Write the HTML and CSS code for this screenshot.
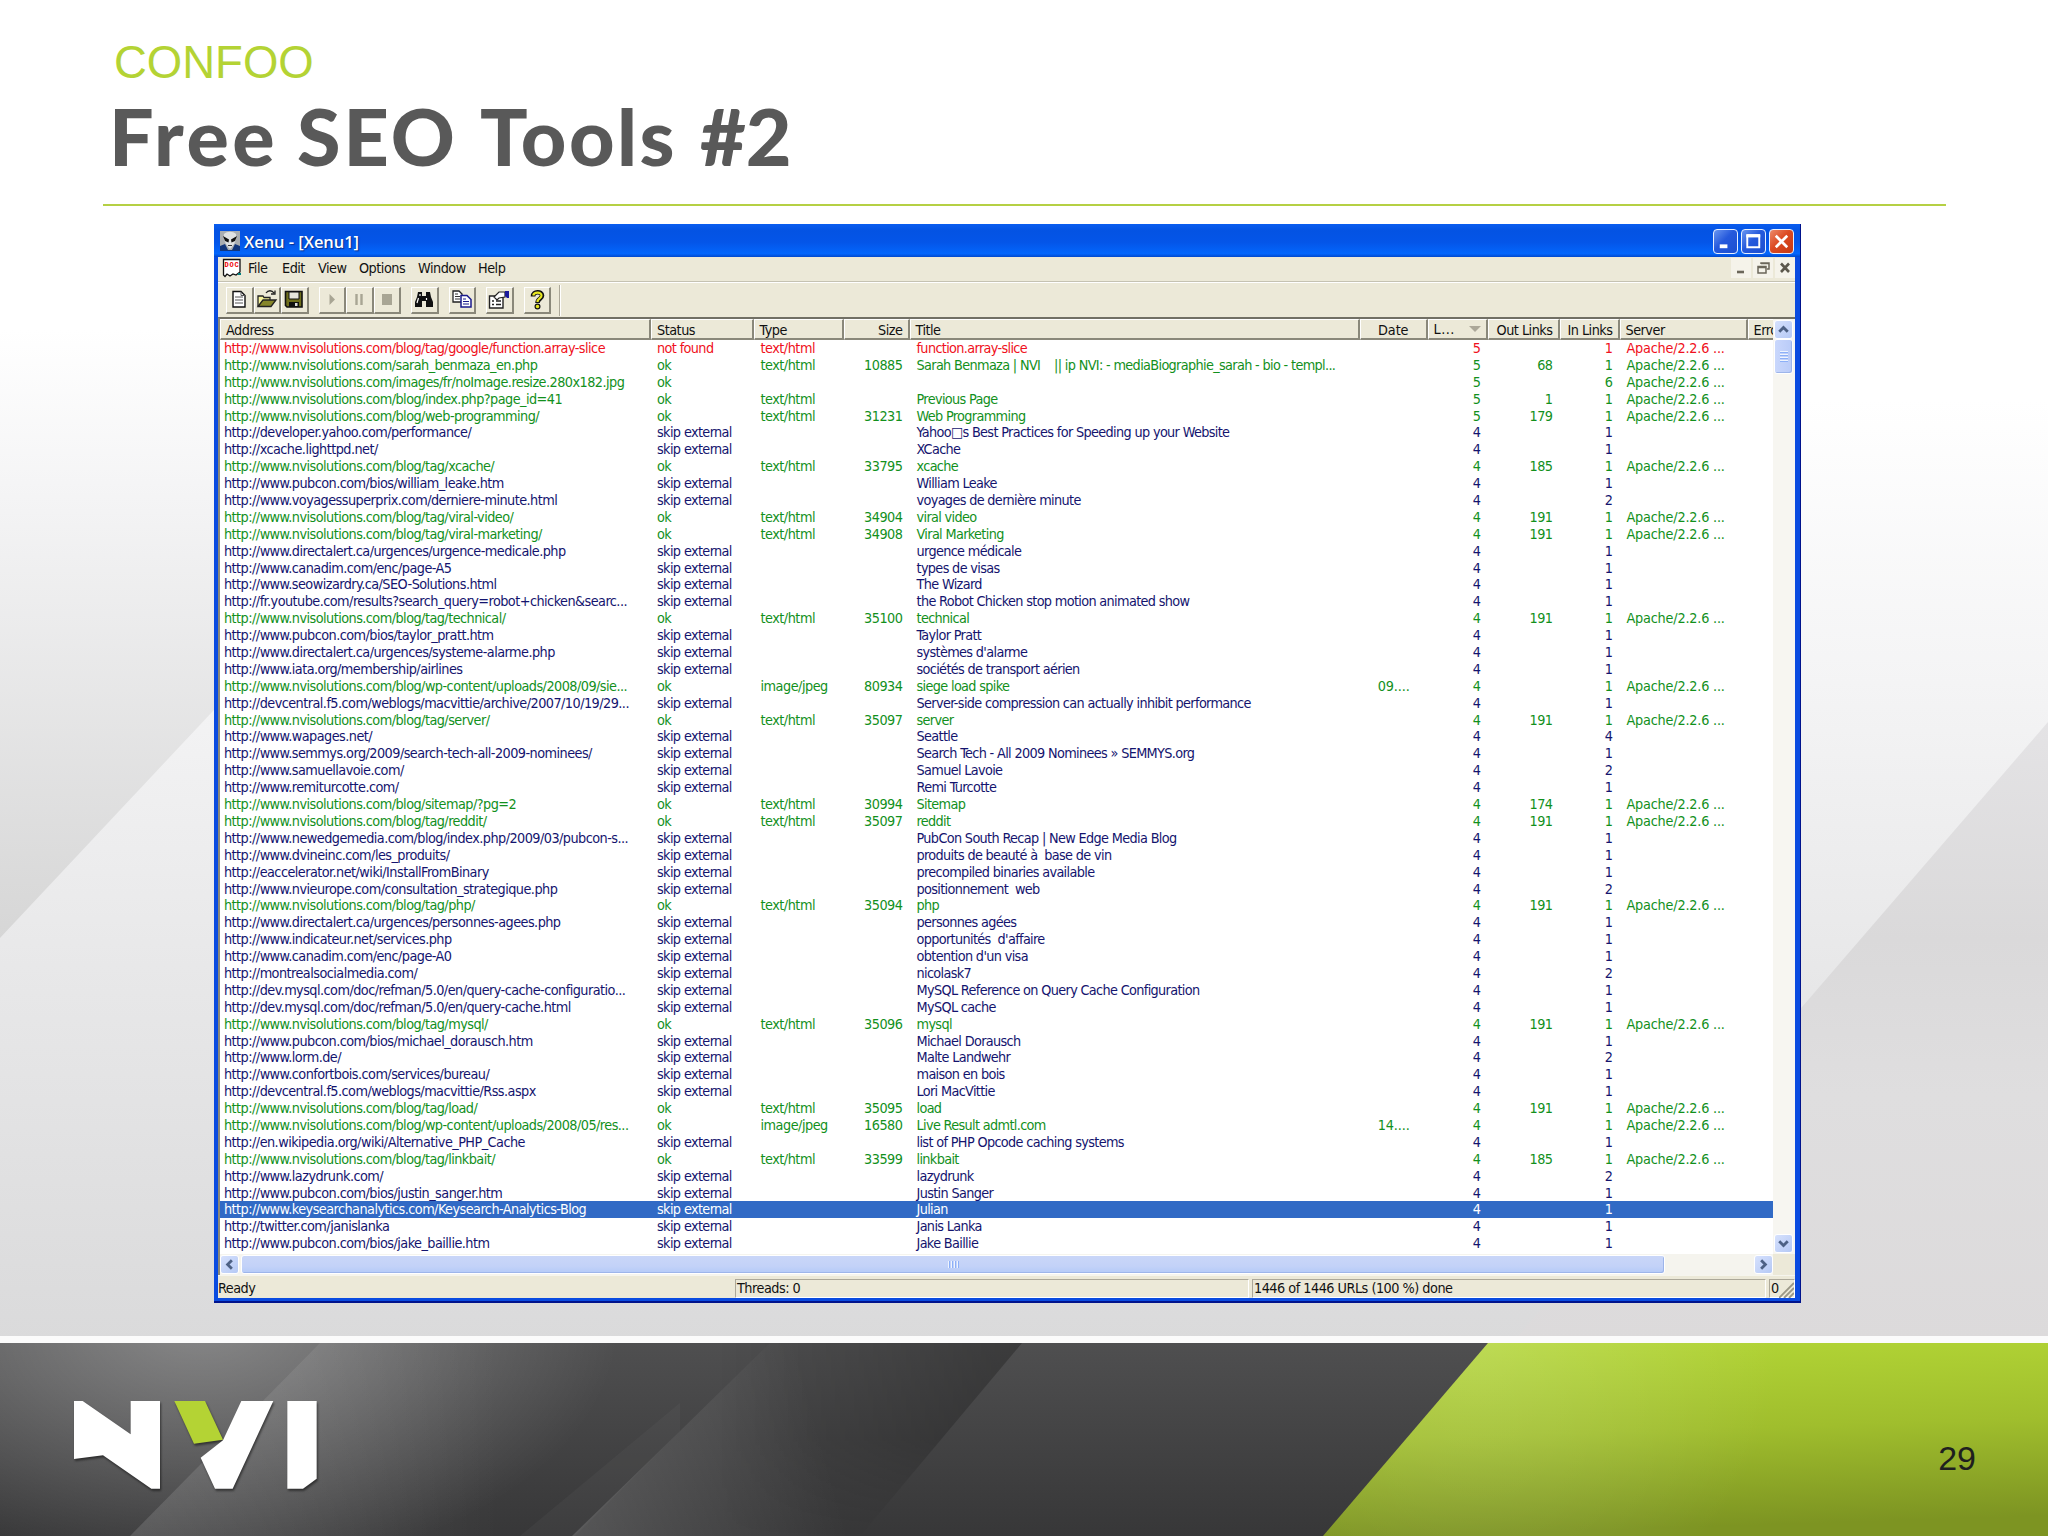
FILE: index.html
```html
<!DOCTYPE html>
<html>
<head>
<meta charset="utf-8">
<title>Free SEO Tools #2</title>
<link rel="stylesheet" href="styles.css">
</head>
<body>
<div class="slide">
  <svg class="backdrop" width="2048" height="1343" viewBox="0 0 2048 1343">
    <defs>
      <linearGradient id="bg-top" gradientUnits="userSpaceOnUse" x1="0" y1="330" x2="0" y2="940">
        <stop offset="0" stop-color="#ffffff"/><stop offset=".25" stop-color="#f5f5f6"/><stop offset="1" stop-color="#d6d6d6"/>
      </linearGradient>
      <linearGradient id="bg-mid" gradientUnits="userSpaceOnUse" x1="0" y1="400" x2="0" y2="1343">
        <stop offset="0" stop-color="#ffffff"/><stop offset=".3" stop-color="#f4f4f5"/><stop offset=".6" stop-color="#e8e8e9"/><stop offset="1" stop-color="#dadadb"/>
      </linearGradient>
      <linearGradient id="bg-right" gradientUnits="userSpaceOnUse" x1="0" y1="722" x2="0" y2="1343">
        <stop offset="0" stop-color="#e4e3e5"/><stop offset=".35" stop-color="#dad9da"/><stop offset=".6" stop-color="#dfdedf"/><stop offset="1" stop-color="#dcdadb"/>
      </linearGradient>
    </defs>
    <rect width="2048" height="1343" fill="url(#bg-mid)"/>
    <path d="M0 0H880L0 938Z" fill="url(#bg-top)"/>
    <path d="M2048 722L1802 1007L1512 1343H2048Z" fill="url(#bg-right)"/>
  </svg>

  <div class="heading">
    <div class="event">CONFOO</div>
    <h1><span class="w1">Free</span><span class="w2">SEO</span><span class="w3">Tools</span><span class="w4">#2</span></h1>
  </div>

  <div class="window">
    <div class="titlebar">
      <svg width="20" height="20" viewBox="0 0 20 20">
        <rect width="20" height="20" fill="#a9adb0"/>
        <path d="M0 20V15L5 13L8 19L12 19L15 13L20 15V20Z" fill="#12377c"/>
        <path d="M4 3C7 0 13 0 16 3C17 8 15 13 10 18C5 13 3 8 4 3Z" fill="#dfe2e2"/>
        <path d="M3 5L9 8.500L8.500 11.500L5 10ZM17 5L11 8.500L11.500 11.500L15 10Z" fill="#111"/>
        <path d="M8 14.500H12" stroke="#333"/>
      </svg>
      <span class="caption">Xenu - [Xenu1]</span>
      <div class="wbtn"><svg viewBox="0 0 24 24"><path d="M6 15H14V19H6Z" fill="#fff"/></svg></div>
      <div class="wbtn"><svg viewBox="0 0 24 24"><path d="M5.500 6V18H18V6Z" fill="none" stroke="#fff" stroke-width="2"/><path d="M4.500 6H19" stroke="#fff" stroke-width="3.500"/></svg></div>
      <div class="wbtn wclose"><svg viewBox="0 0 24 24"><path d="M6 6L18 18M18 6L6 18" stroke="#fff" stroke-width="2.800"/></svg></div>
    </div>

    <div class="menubar">
      <svg width="20" height="20" viewBox="0 0 20 20">
        <path d="M1.500 1.500H18V14L14 17L11 16L8 18L5 16L3 18.500L1.500 17Z" fill="#fff" stroke="#111" stroke-width="1.300"/>
        <path d="M16 15H19V17H16Z" fill="#008080"/>
        <text x="2.500" y="8.500" class="doc">DOC</text>
      </svg>
      <span class="m1">File</span><span class="m2">Edit</span><span class="m3">View</span><span class="m4">Options</span><span class="m5">Window</span><span>Help</span>
      <div class="mdi">
        <svg viewBox="0 0 20 20"><path d="M6 14H13" stroke="#6b675a" stroke-width="2.600"/></svg>
        <svg viewBox="0 0 20 20"><path d="M5 8.500H13V15H5ZM5 9.500H13M8 6V5H16V11H14M8 5.500H16" fill="none" stroke="#6b675a" stroke-width="1.500"/></svg>
        <svg viewBox="0 0 20 20"><path d="M6 5.500L14 14M14 5.500L6 14" stroke="#5c584c" stroke-width="2.600"/></svg>
      </div>
    </div>

    <div class="toolbar">
      <div class="btns">
        <div class="tb"><svg viewBox="0 0 24 22"><path d="M6 2.500H14L18 6.500V18H6Z" fill="#fff" stroke="#111" stroke-width="1.400"/><path d="M14 2.500V6.500H18M8 8H16M8 11H16M8 14H16" fill="none" stroke="#555"/></svg></div>
        <div class="tb"><svg viewBox="0 0 24 22"><path d="M3 17V7H8L9 8.500H15V11" fill="#f5f29a" stroke="#222" stroke-width="1.300"/><path d="M3 17.500L8 11H21L16 17.500Z" fill="#86862a" stroke="#222" stroke-width="1.300"/><path d="M11 4C13 1 17 1 19 4M20 1.500V5H16" fill="none" stroke="#222" stroke-width="1.300"/></svg></div>
        <div class="tb"><svg viewBox="0 0 24 22"><path d="M3.500 2.500H20V18H5L3.500 16.500Z" fill="#6f6f1c" stroke="#111" stroke-width="1.600"/><path d="M7 3H17V10H7Z" fill="#e6e6dc" stroke="#111"/><path d="M7 13H17V18H7Z" fill="#111"/><path d="M13 14H15.500V17H13Z" fill="#ddd"/></svg></div>
      </div>
      <div class="btns">
        <div class="tb"><svg viewBox="0 0 24 22"><path d="M9.500 5L15 10.500L9.500 16Z" fill="#a8a594"/></svg></div>
        <div class="tb"><svg viewBox="0 0 24 22"><path d="M9.500 5V16M14.500 5V16" stroke="#a8a594" stroke-width="2.400"/></svg></div>
        <div class="tb"><svg viewBox="0 0 24 22"><path d="M7 5H17V16H7Z" fill="#a8a594"/></svg></div>
      </div>
      <div class="btns">
        <div class="tb"><svg viewBox="0 0 24 22"><path d="M6 3H10V7H14V3H18L19 8L21 13V18H14V12H10V18H3V13L5 8Z" fill="#111"/><path d="M6.500 9L5 14M14.500 9V11M8 5V7" stroke="#fff" stroke-width="1.200"/></svg></div>
      </div>
      <div class="btns">
        <div class="tb"><svg viewBox="0 0 24 22"><path d="M3 2H9L12 5V13H3Z" fill="#fff" stroke="#222" stroke-width="1.300"/><path d="M5 5H8M5 7.500H10M5 10H10" stroke="#333"/><path d="M11 6.500H17L21 10.500V18H11Z" fill="#fff" stroke="#1a1a8c" stroke-width="1.500"/><path d="M13 10H16M13 12.500H19M13 15H19" stroke="#1a1a8c"/></svg></div>
      </div>
      <div class="btns">
        <div class="tb"><svg viewBox="0 0 24 22"><path d="M2.500 7H16V19H2.500Z" fill="#fff" stroke="#222" stroke-width="1.400"/><path d="M5 12H7M9 12H14M5 15.500H7M9 15.500H14" stroke="#222" stroke-width="1.300"/><path d="M7 8L12 3H18V8L12 9L10 11Z" fill="#fff" stroke="#222" stroke-width="1.200"/><path d="M18 2H22V9H20L18 7Z" fill="#1a1a9c"/></svg></div>
      </div>
      <div class="btns">
        <div class="tb"><svg viewBox="0 0 24 22"><path d="M8 7.500C8 2 17 2 17 6.500C17 10 12.500 9.500 12.500 14" fill="none" stroke="#111" stroke-width="4.600"/><path d="M8.200 6.500C9 3 16.500 2.500 16.500 6.500C16.500 9.500 12.500 9.500 12.500 13" fill="none" stroke="#e8e822" stroke-width="2.200"/><circle cx="12.500" cy="17.500" r="2.400" fill="#e8e822" stroke="#111" stroke-width="1.200"/></svg></div>
      </div>
      <div class="tb-end"></div>
    </div>

    <div class="client">
      <div class="list">
        <div class="row head">
          <span>Address</span><span>Status</span><span>Type</span><span class="r">Size</span><span>Title</span><span class="c">Date</span><span class="lvl">L...<i></i></span><span class="r">Out Links</span><span class="r">In Links</span><span>Server</span><span>Error</span>
        </div>
        <div id="rows"></div>
      </div>
      <div class="vscroll">
        <div class="sbtn"><svg viewBox="0 0 18 18"><path d="M4.500 11.500L9 7L13.500 11.500" fill="none" stroke="#4d6185" stroke-width="3"/></svg></div>
        <div class="vthumb"><i></i><i></i><i></i><i></i></div>
        <div class="track"></div>
        <div class="sbtn"><svg viewBox="0 0 18 18"><path d="M4.500 6.500L9 11L13.500 6.500" fill="none" stroke="#4d6185" stroke-width="3"/></svg></div>
      </div>
    </div>

    <div class="hscroll">
      <div class="sbtn"><svg viewBox="0 0 18 18"><path d="M11.500 4.500L7 9L11.500 13.500" fill="none" stroke="#4d6185" stroke-width="3"/></svg></div>
      <div class="hthumb"><i></i><i></i><i></i><i></i></div>
      <div class="track"></div>
      <div class="sbtn"><svg viewBox="0 0 18 18"><path d="M6.500 4.500L11 9L6.500 13.500" fill="none" stroke="#4d6185" stroke-width="3"/></svg></div>
      <div class="corner"></div>
    </div>

    <div class="statusbar">
      <div class="s0">Ready</div>
      <div class="pane p1">Threads: 0</div>
      <div class="pane p2">1446 of 1446 URLs (100 %) done</div>
      <div class="pane p3">0<svg width="15" height="16" viewBox="0 0 15 16"><path d="M0 16L15 1M5 16L15 6M10 16L15 11" stroke="#9a9786" stroke-width="1.800"/></svg></div>
    </div>
  </div>

  <div class="footer">
    <svg class="footer-bg" width="2048" height="193" viewBox="0 0 2048 193">
      <defs>
        <linearGradient id="f-base" x1="0" y1="0" x2="0" y2="1">
          <stop offset="0" stop-color="#4f4f50"/><stop offset="1" stop-color="#373738"/>
        </linearGradient>
        <radialGradient id="f-glow" gradientUnits="userSpaceOnUse" cx="200" cy="-20" r="420" gradientTransform="matrix(1 0 0 .6 0 -8)">
          <stop offset="0" stop-color="#fff" stop-opacity=".32"/><stop offset="1" stop-color="#fff" stop-opacity="0"/>
        </radialGradient>
        <linearGradient id="f-band" gradientUnits="userSpaceOnUse" x1="130" y1="193" x2="500" y2="193">
          <stop offset="0" stop-color="#fff" stop-opacity=".14"/><stop offset="1" stop-color="#fff" stop-opacity="0"/>
        </linearGradient>
        <linearGradient id="f-band2" gradientUnits="userSpaceOnUse" x1="570" y1="193" x2="830" y2="120">
          <stop offset="0" stop-color="#fff" stop-opacity=".15"/><stop offset="1" stop-color="#fff" stop-opacity="0"/>
        </linearGradient>
        <linearGradient id="f-dark" gradientUnits="userSpaceOnUse" x1="720" y1="0" x2="1020" y2="0">
          <stop offset="0" stop-color="#000" stop-opacity="0"/><stop offset="1" stop-color="#000" stop-opacity=".25"/>
        </linearGradient>
        <linearGradient id="f-fade" x1="0" y1="0" x2="0" y2="1">
          <stop offset="0" stop-color="#fff"/><stop offset=".5" stop-color="#fff"/><stop offset="1" stop-color="#000"/>
        </linearGradient>
        <mask id="f-mask"><rect width="2048" height="193" fill="url(#f-fade)"/></mask>
        <linearGradient id="f-green" x1="0" y1="0" x2=".12" y2="1">
          <stop offset="0" stop-color="#b3d636"/><stop offset=".5" stop-color="#a0be2d"/><stop offset="1" stop-color="#7d9422"/>
        </linearGradient>
        <radialGradient id="f-light" gradientUnits="userSpaceOnUse" cx="1480" cy="0" r="300">
          <stop offset="0" stop-color="#fff" stop-opacity=".15"/><stop offset="1" stop-color="#fff" stop-opacity="0"/>
        </radialGradient>
      </defs>
      <rect width="2048" height="193" fill="url(#f-base)"/>
      <path d="M720 0H1022L860 193H620Z" fill="url(#f-dark)" mask="url(#f-mask)"/>
      <rect width="800" height="193" fill="url(#f-glow)"/>
      <path d="M320 0H720L520 193H130Z" fill="url(#f-band)"/>
      <path d="M680 60L520 193H575L680 88Z" fill="#fff" fill-opacity=".03"/>
      <path d="M770 0L680 88L572 193H860L900 0Z" fill="url(#f-band2)"/>
      <path d="M1488 0L1323 193H2048V0Z" fill="url(#f-green)"/>
      <path d="M1488 0L1323 193H2048V0Z" fill="url(#f-light)"/>
    </svg>
    <svg class="logo" width="250" height="92" viewBox="0 0 750 276">
      <g fill="#fff">
        <path d="M0 0H26L170 100V0H258V263H232L87 163L0 174Z"/>
        <path d="M502 0H598L476 263H423L380 170L447 118Z"/>
        <path d="M640 0H728V233L687 263H640Z"/>
      </g>
      <path d="M301 0H393L447 116L360 128Z" fill="#b4d334"/>
    </svg>
    <div class="page">29</div>
  </div>
</div>

<script>
// address | status | type | size | title | date | level | out | in
// n = not found, o = ok, s = skip external
var data = [
'http://www.nvisolutions.com/blog/tag/google/function.array-slice|n|h||function.array-slice||5||1',
'http://www.nvisolutions.com/sarah_benmaza_en.php|o|h|10885|Sarah Benmaza | NVI    || ip NVI: - mediaBiographie_sarah - bio - templ...||5|68|1',
'http://www.nvisolutions.com/images/fr/noImage.resize.280x182.jpg|o|||||5||6',
'http://www.nvisolutions.com/blog/index.php?page_id=41|o|h||Previous Page||5|1|1',
'http://www.nvisolutions.com/blog/web-programming/|o|h|31231|Web Programming||5|179|1',
'http://developer.yahoo.com/performance/|s|||Yahoo\u25a1s Best Practices for Speeding up your Website||4||1',
'http://xcache.lighttpd.net/|s|||XCache||4||1',
'http://www.nvisolutions.com/blog/tag/xcache/|o|h|33795|xcache||4|185|1',
'http://www.pubcon.com/bios/william_leake.htm|s|||William Leake||4||1',
'http://www.voyagessuperprix.com/derniere-minute.html|s|||voyages de dernière minute||4||2',
'http://www.nvisolutions.com/blog/tag/viral-video/|o|h|34904|viral video||4|191|1',
'http://www.nvisolutions.com/blog/tag/viral-marketing/|o|h|34908|Viral Marketing||4|191|1',
'http://www.directalert.ca/urgences/urgence-medicale.php|s|||urgence médicale||4||1',
'http://www.canadim.com/enc/page-A5|s|||types de visas||4||1',
'http://www.seowizardry.ca/SEO-Solutions.html|s|||The Wizard||4||1',
'http://fr.youtube.com/results?search_query=robot+chicken&searc...|s|||the Robot Chicken stop motion animated show||4||1',
'http://www.nvisolutions.com/blog/tag/technical/|o|h|35100|technical||4|191|1',
'http://www.pubcon.com/bios/taylor_pratt.htm|s|||Taylor Pratt||4||1',
'http://www.directalert.ca/urgences/systeme-alarme.php|s|||systèmes d\'alarme||4||1',
'http://www.iata.org/membership/airlines|s|||sociétés de transport aérien||4||1',
'http://www.nvisolutions.com/blog/wp-content/uploads/2008/09/sie...|o|i|80934|siege load spike|09....|4||1',
'http://devcentral.f5.com/weblogs/macvittie/archive/2007/10/19/29...|s|||Server-side compression can actually inhibit performance||4||1',
'http://www.nvisolutions.com/blog/tag/server/|o|h|35097|server||4|191|1',
'http://www.wapages.net/|s|||Seattle||4||4',
'http://www.semmys.org/2009/search-tech-all-2009-nominees/|s|||Search Tech - All 2009 Nominees » SEMMYS.org||4||1',
'http://www.samuellavoie.com/|s|||Samuel Lavoie||4||2',
'http://www.remiturcotte.com/|s|||Remi Turcotte||4||1',
'http://www.nvisolutions.com/blog/sitemap/?pg=2|o|h|30994|Sitemap||4|174|1',
'http://www.nvisolutions.com/blog/tag/reddit/|o|h|35097|reddit||4|191|1',
'http://www.newedgemedia.com/blog/index.php/2009/03/pubcon-s...|s|||PubCon South Recap | New Edge Media Blog||4||1',
'http://www.dvineinc.com/les_produits/|s|||produits de beauté à  base de vin||4||1',
'http://eaccelerator.net/wiki/InstallFromBinary|s|||precompiled binaries available||4||1',
'http://www.nvieurope.com/consultation_strategique.php|s|||positionnement  web||4||2',
'http://www.nvisolutions.com/blog/tag/php/|o|h|35094|php||4|191|1',
'http://www.directalert.ca/urgences/personnes-agees.php|s|||personnes agées||4||1',
'http://www.indicateur.net/services.php|s|||opportunités  d\'affaire||4||1',
'http://www.canadim.com/enc/page-A0|s|||obtention d\'un visa||4||1',
'http://montrealsocialmedia.com/|s|||nicolask7||4||2',
'http://dev.mysql.com/doc/refman/5.0/en/query-cache-configuratio...|s|||MySQL Reference on Query Cache Configuration||4||1',
'http://dev.mysql.com/doc/refman/5.0/en/query-cache.html|s|||MySQL cache||4||1',
'http://www.nvisolutions.com/blog/tag/mysql/|o|h|35096|mysql||4|191|1',
'http://www.pubcon.com/bios/michael_dorausch.htm|s|||Michael Dorausch||4||1',
'http://www.lorm.de/|s|||Malte Landwehr||4||2',
'http://www.confortbois.com/services/bureau/|s|||maison en bois||4||1',
'http://devcentral.f5.com/weblogs/macvittie/Rss.aspx|s|||Lori MacVittie||4||1',
'http://www.nvisolutions.com/blog/tag/load/|o|h|35095|load||4|191|1',
'http://www.nvisolutions.com/blog/wp-content/uploads/2008/05/res...|o|i|16580|Live Result admtl.com|14....|4||1',
'http://en.wikipedia.org/wiki/Alternative_PHP_Cache|s|||list of PHP Opcode caching systems||4||1',
'http://www.nvisolutions.com/blog/tag/linkbait/|o|h|33599|linkbait||4|185|1',
'http://www.lazydrunk.com/|s|||lazydrunk||4||2',
'http://www.pubcon.com/bios/justin_sanger.htm|s|||Justin Sanger||4||1',
'http://www.keysearchanalytics.com/Keysearch-Analytics-Blog|s|||Julian||4||1',
'http://twitter.com/janislanka|s|||Janis Lanka||4||1',
'http://www.pubcon.com/bios/jake_baillie.htm|s|||Jake Baillie||4||1'
];
var types = { h: 'text/html', i: 'image/jpeg' };
var names = { n: 'not found', o: 'ok', s: 'skip external' };
var cols = ['addr', 'st', '', 'r', 'ttl', 'c', 'r', 'r', 'r', 'srv'];
var box = document.getElementById('rows');

data.forEach(function (line, i) {
  var p = line.split('|');
  // titles may contain the separator themselves
  var tail = p.splice(p.length - 4, 4);
  var title = p.slice(4).join('|');
  var kind = p[1];
  var cells = [p[0], names[kind], types[p[2]] || '', p[3], title].concat(tail);
  cells.push(kind == 's' ? '' : 'Apache/2.2.6 ...');
  var row = document.createElement('div');
  row.className = 'row ' + kind + (i == 51 ? ' selected' : '');
  cells.forEach(function (text, c) {
    var cell = document.createElement('span');
    cell.className = cols[c];
    cell.textContent = text;
    row.appendChild(cell);
  });
  box.appendChild(row);
});
</script>
</body>
</html>
```
FILE: styles.css
```css
* { box-sizing: border-box; }
body { margin: 0; background: #fff; }
.slide { position: relative; width: 2048px; height: 1536px; overflow: hidden; display: flex; flex-direction: column; }
.backdrop { position: absolute; left: 0; top: 0; }

.heading { position: relative; height: 206px; flex: none; margin: 0 102px 0 103px; padding: 37px 0 0 11px; border-bottom: 2px solid #b5d044; }
.event { height: 51px; line-height: 52px; font-family: "Liberation Sans", Arial, sans-serif; font-size: 45.500px; color: #b4d334; }
h1 { display: flex; margin: 0 0 0 -5px; height: 96px; line-height: 96px; font-family: Lato, "Open Sans", sans-serif; font-weight: 900; font-size: 79px; color: #595959; white-space: nowrap; }
.w1 { width: 188px; letter-spacing: 3.500px; }
.w2 { width: 183px; letter-spacing: 3px; }
.w3 { width: 220px; letter-spacing: 2.500px; }

.window { position: relative; width: 1587px; height: 1079px; flex: none; margin: 18px 0 0 214px; padding: 0 5px 4px 4px; background: #0a4be0; border-right: 1px solid #00138c; border-bottom: 2px solid #00138c; display: flex; flex-direction: column; font-family: "DejaVu Sans Condensed", "DejaVu Sans", sans-serif; font-size: 14.300px; letter-spacing: -0.500px; color: #111; }
.titlebar { height: 33px; flex: none; margin: 0 -5px 0 -4px; padding: 1px 6px 0 6px; display: flex; align-items: center; background: linear-gradient(#0a5df0, #0453e3 20%, #0455e8 55%, #0366fc 90%, #0148cc); }
.caption { flex: 1; margin-left: 4px; font-family: "Open Sans", sans-serif; font-weight: 600; font-size: 16.500px; letter-spacing: -0.050px; color: #fff; text-shadow: 1px 1px 1px #0a2f8c; }
.wbtn { width: 25px; height: 25px; margin-left: 3px; border: 1px solid #e8f0ff; border-radius: 4px; background: linear-gradient(135deg, #6a96f0, #2559dc 45%, #1c4fd0); }
.wbtn svg { display: block; width: 23px; height: 23px; }
.wclose { background: linear-gradient(135deg, #ec8a6a, #dc4a22 45%, #c63a14); }

.menubar { height: 25px; flex: none; padding: 0 0 2px 4px; display: flex; align-items: center; background: #ece9d8; border-bottom: 1px solid #c5c2b2; }
.menubar > svg { margin-right: 6px; }
.doc { font: bold 7px "Liberation Mono", monospace; letter-spacing: 0.800px; fill: #e00; }
.m1 { width: 34px; }
.m2 { width: 36px; }
.m3 { width: 41px; }
.m4 { width: 59px; }
.m5 { width: 60px; }
.mdi { margin-left: auto; display: flex; gap: 2px; }
.mdi svg { width: 20px; height: 20px; background: #f5f3ea; }

.toolbar { height: 35px; flex: none; padding: 4px 0 0 8px; display: flex; background: #ece9d8; border-top: 1px solid #fff; }
.btns { display: flex; height: 27px; margin-right: 10px; }
.tb { width: 27.500px; height: 27px; border: 1px solid; border-color: #fff #8a887a #8a887a #fff; border-right-width: 2px; border-bottom-width: 2px; }
.tb svg { display: block; width: 24px; height: 24px; }
.tb-end { width: 2px; height: 31px; margin: -2px 0 0 -2px; border-left: 1px solid #aca899; border-right: 1px solid #fff; }

.client { height: 937px; flex: none; display: flex; border-top: 2px solid #716f64; border-left: 2px solid #8a887a; background: #fff; }
.list { width: 1554px; overflow: hidden; }
.row { display: grid; grid-template-columns: 431px 102.500px 90.500px 65.500px 450.500px 67.500px 60px 72px 60px 128px 70px; height: 16.906px; line-height: 17px; white-space: pre; }
.row span { padding: 0 7px; overflow: hidden; }
.row .addr { padding-left: 4px; letter-spacing: -0.540px; }
.row .st { padding-left: 6px; letter-spacing: -0.620px; }
.row .ttl { letter-spacing: -0.650px; }
.row .srv { letter-spacing: -0.200px; }
.row .r { text-align: right; }
.row .c { text-align: center; letter-spacing: -0.100px; }
.n { color: #f01020; }
.o { color: #12901c; }
.s { color: #14146e; }
.selected { background: #316ac5; color: #fff; }
.head { height: 21px; line-height: 21px; }
.head span { background: #ece9d8; border-top: 1px solid #fff; border-left: 1px solid #fff; border-right: 2px solid #8a887a; border-bottom: 2px solid #8a887a; padding: 0 5px 0 5px; }
.head .lvl { display: flex; justify-content: space-between; align-items: center; letter-spacing: 0.500px; }
.lvl i { border: 6px solid transparent; border-top: 6px solid #aca899; border-bottom: 0; }

.vscroll { flex: 1; padding: 1px 2px 1px 1px; display: flex; flex-direction: column; background: #f7f6f1; }
.sbtn { width: 19px; height: 19px; flex: none; border: 1px solid #fff; border-radius: 3px; background: linear-gradient(135deg, #d6e1fd, #b5c9f5); }
.sbtn svg { display: block; width: 17px; height: 17px; }
.vthumb, .hthumb { display: flex; align-items: center; justify-content: center; border: 1px solid #fff; border-radius: 3px; box-shadow: inset -1px -1px 0 #9db5ea; }
.vthumb { width: 19px; height: 35px; flex-direction: column; gap: 1px; background: linear-gradient(90deg, #c9d7fc, #b9cbf8); }
.vthumb i { width: 8px; height: 2px; border-top: 1px solid #eef4fe; border-bottom: 1px solid #8cb0f8; }
.track { flex: 1; }

.hscroll { height: 21px; flex: none; padding: 1px 0; display: flex; background: #f5f4ee; border-left: 2px solid #8a887a; }
.hthumb { width: 1424px; height: 19px; margin-left: 2px; gap: 1px; background: linear-gradient(#c9d6f8, #c3d2f8 60%, #b4caf8); }
.hthumb i { width: 2px; height: 7px; border-left: 1px solid #eef4fe; border-right: 1px solid #8cb0f8; }
.corner { width: 22px; margin: -1px 0; background: #ece9d8; }

.statusbar { flex: 1; display: flex; padding-top: 3px; background: #ece9d8; line-height: 17px; border-top: 1px solid #f6f5ee; }
.s0 { width: 517px; padding-top: 1px; }
.pane { height: 19px; margin-right: 3px; padding-left: 1px; border: 1px solid; border-color: #aca899 #fff #fff #aca899; }
.p1 { width: 514px; }
.p2 { width: 514px; }
.p3 { flex: 1; margin-right: 0; display: flex; justify-content: space-between; }
.p3 svg { margin: 2px 0 0; }

.footer { position: relative; height: 200px; flex: none; margin-top: 33px; border-top: 7px solid #fbfbfb; display: flex; align-items: flex-start; justify-content: space-between; }
.footer-bg { position: absolute; left: 0; top: 0; }
.logo { position: relative; margin: 58px 0 0 73.500px; filter: drop-shadow(1px 2px 1px rgba(0,0,0,.5)); }
.page { position: relative; margin: 94px 72px 0 0; font-family: "Liberation Sans", Arial, sans-serif; font-size: 34px; line-height: 42px; color: #1f1f1f; }
```
